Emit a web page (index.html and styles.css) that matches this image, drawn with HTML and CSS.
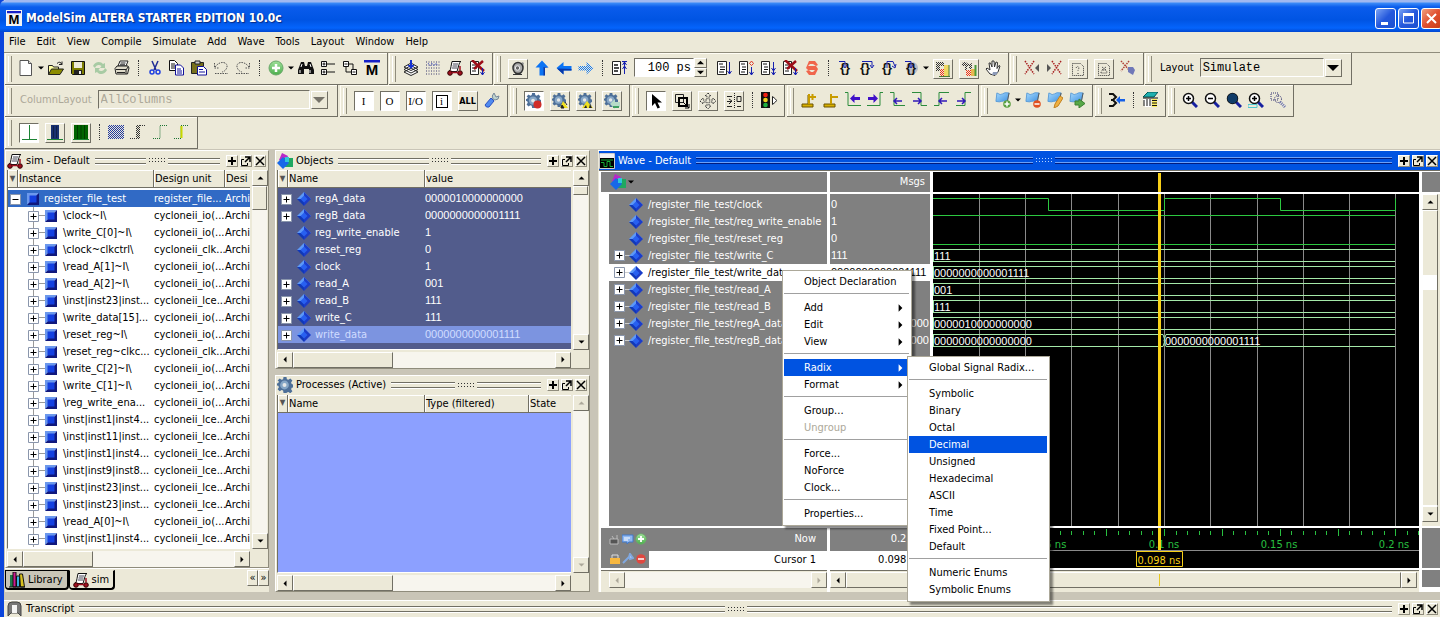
FILE: index.html
```html
<!DOCTYPE html>
<html lang="en">
<head>
<meta charset="utf-8">
<title>ModelSim ALTERA STARTER EDITION 10.0c</title>
<link rel="stylesheet" href="styles.css">
</head>
<body>
<svg class="sprite" aria-hidden="true">
<defs>
<pattern id="dk" width="2" height="2" patternUnits="userSpaceOnUse"><path d="M0 0h1v1H0zM1 1h1v1H1z" fill="#333"/></pattern>
<pattern id="db" width="2" height="2" patternUnits="userSpaceOnUse"><path d="M0 0h1v1H0zM1 1h1v1H1z" fill="#2038a0"/></pattern>
<pattern id="dl" width="2" height="2" patternUnits="userSpaceOnUse"><path d="M0 0h1v1H0zM1 1h1v1H1z" fill="#1478f0"/></pattern>
<pattern id="dr" width="2" height="2" patternUnits="userSpaceOnUse"><path d="M0 0h1v1H0zM1 1h1v1H1z" fill="#f03018"/></pattern>
<linearGradient id="gg" x2="0" y2="1"><stop stop-color="#9fe09a"/><stop offset="1" stop-color="#4cae4c"/></linearGradient>
<linearGradient id="gb" x2="1" y2="1"><stop stop-color="#a8dcff"/><stop offset="1" stop-color="#3d8fe0"/></linearGradient>
<symbol id="i-new" viewBox="0 0 16 16"><path d="M2 .5h8.500l3 3v12H2z" fill="#fff" stroke="#555"/><path d="M10.500.5v3h3" fill="#ddd" stroke="#555"/></symbol>
<symbol id="i-open" viewBox="0 0 16 16"><path d="M.5 14.500v-9h4l1 1.500h5v2" fill="#ffffa0" stroke="#222"/><path d="M.5 14.500l3-5.500h12l-3.500 5.500z" fill="#8c8c00" stroke="#222"/><path d="M9 3.500q3-3 5 1m0-3v3h-3" fill="none" stroke="#222"/></symbol>
<symbol id="i-save" viewBox="0 0 16 16"><path d="M1.500 1.500h13v13h-12l-1-1z" fill="#7c7c00" stroke="#111"/><path d="M4 2h8v6H4z" fill="#ece9d8"/><path d="M4 10h8v4H4z" fill="#222"/><path d="M9 11h2v3H9z" fill="#eee"/></symbol>
<symbol id="i-refresh" viewBox="0 0 16 16"><path d="M1 6c2-5 8-5 10-2l2-1v5H8l1.500-2C7 4 4 5 3 8zM15 10c-2 5-8 5-10 2l-2 1V8h5L6.500 10C9 12 12 11 13 8z" fill="#a8cba4"/></symbol>
<symbol id="i-print" viewBox="0 0 16 16"><path d="M4 6l2-5h8l-2 5z" fill="#fff" stroke="#222"/><path d="M1 8.500l2-2.500h11l1 2-1.500 6H2z" fill="#e0dccb" stroke="#222"/><path d="M2 9.500h10M3 12.500h8M14 7l-2 3v4M6.500 3h5M6 4.800h5" stroke="#222" fill="none"/></symbol>
<symbol id="i-cut" viewBox="0 0 16 16"><path d="M5 1l4 9M11 1l-4 9" stroke="#1d2b96" stroke-width="1.500"/><circle cx="5" cy="12" r="2" fill="none" stroke="#2040e0" stroke-width="1.500"/><circle cx="11" cy="12" r="2" fill="none" stroke="#2040e0" stroke-width="1.500"/></symbol>
<symbol id="i-copy" viewBox="0 0 16 16"><path d="M.5.5h5l3 3v7h-8z" fill="#fff" stroke="#111"/><path d="M2 4h4M2 6h4M2 8h4" stroke="#111"/><path d="M6.500 5h5l3 3v7h-8z" fill="#fff" stroke="#10109a"/><path d="M8 9h4M8 11h5M8 13h5" stroke="#10109a"/></symbol>
<symbol id="i-paste" viewBox="0 0 16 16"><path d="M.5 2.500h12v11H.5z" fill="#77701c" stroke="#222"/><path d="M4 1h5v3H4z" fill="#ccc" stroke="#222"/><path d="M6.500 6.500h6l3 3v5.500h-9z" fill="#fff" stroke="#10109a"/><path d="M8 9.500h4M8 12h6" stroke="#10109a"/></symbol>
<symbol id="i-undo" viewBox="0 0 16 16"><path d="M1.500 3v5h5M2 7C7 0 15 2 14 7q-1 4-5 5M2 13.500h13" fill="none" stroke="#555" stroke-dasharray="1.500 1"/></symbol>
<symbol id="i-redo" viewBox="0 0 16 16"><path d="M14.500 3v5h-5M14 7C9 0 1 2 2 7q1 4 5 5M1 13.500h13" fill="none" stroke="#555" stroke-dasharray="1.500 1"/></symbol>
<symbol id="i-add" viewBox="0 0 16 16"><circle cx="8" cy="8" r="7" fill="url(#gg)" stroke="#6aa86a"/><path d="M8 4v8M4 8h8" stroke="#fff" stroke-width="2.500"/></symbol>
<symbol id="i-bino" viewBox="0 0 16 16"><path d="M3 2h3l1 4h2l1-4h3l3 8v4h-5V9H6v5H0v-4z" fill="#111"/><path d="M2 10v3M12 10v3M4 4l-1 3M12 4l1 3" stroke="#fff"/></symbol>
<symbol id="i-tree" viewBox="0 0 16 16"><path d="M1.500 1.500h5v5h-5zM1.500 9.500h5v5h-5z" fill="#fff" stroke="#111"/><path d="M2.500 4h3M4 2.500v3M2.500 12h3M4 10.500v3M7 4h8M7 12h8" stroke="#111"/></symbol>
<symbol id="i-tree2" viewBox="0 0 16 16"><path d="M1.500 1.500h5v5h-5zM9.500 9.500h5v5h-5z" fill="#fff" stroke="#111"/><path d="M2.500 4h3M10.500 12h3M7 4h4v5M4 7v5h5" stroke="#111" fill="none"/></symbol>
<symbol id="i-m" viewBox="0 0 16 16"><path d="M0 0h16v2.500H0z" fill="#1620c8"/><text x="8" y="15" text-anchor="middle" class="glyph-m">M</text></symbol>
<symbol id="i-layers" viewBox="0 0 16 16"><path d="M1 12l7-4 7 4-7 3.500zM1 9.500l7-4 7 4-7 3.500zM1 7l7-4 7 4-7 3.500z" fill="#fff" stroke="#222"/><path d="M8 0v6" stroke="#1430d0" stroke-width="2"/><path d="M4.500 5h7L8 9z" fill="#1430d0"/></symbol>
<symbol id="i-dither" viewBox="0 0 16 16"><path d="M1 2h14M1 5h14M1 8h14M1 11h14M1 14h14" stroke="#38386c" stroke-dasharray="1 1.500" fill="none"/><path d="M3 3l2 3 2-3 2 3 2-3 2 3" fill="none" stroke="#4050c0" stroke-dasharray="1 1"/></symbol>
<symbol id="i-cart" viewBox="0 0 16 16"><path d="M5 1.500h9q-2 1-2 3l-2 7H2q2-2 2-5z" fill="#fff" stroke="#111"/><path d="M6 4h5M5.500 6h5M5 8h5" stroke="#445"/><circle cx="3" cy="13" r="2.300" fill="#a01020" stroke="#300"/><circle cx="13" cy="13" r="2.300" fill="#a01020" stroke="#300"/><path d="M5 12.500h6M13 10V6" stroke="#a01020" stroke-width="1.500"/></symbol>
<symbol id="i-runx" viewBox="0 0 16 16"><path d="M1.500 1.500h8v13h-8z" fill="#fff" stroke="#222"/><path d="M3 5h4M3 8h5M3 11h4" stroke="#111"/><path d="M3 0l12 11M14 1L5 9" stroke="#9c0c18" stroke-width="2.500"/><path d="M13.500 8v7M11.500 12l2 3 2-3" stroke="#1620b0" fill="none"/></symbol>
<symbol id="i-ring" viewBox="0 0 16 16"><path d="M12 1l2 1-3 11H5z" fill="#999"/><ellipse cx="8" cy="7" rx="5" ry="5.500" fill="#aaa" stroke="#333" stroke-width="1.500"/><circle cx="7.500" cy="7" r="2.200" fill="#666" stroke="#eee"/><path d="M3 13.500h9" stroke="#333"/></symbol>
<symbol id="i-up" viewBox="0 0 16 16"><path d="M8 .5l6.500 7h-4v8h-5v-8h-4z" fill="#0c74f4"/><path d="M9.500 7v8.500h1.500V8h3.500" fill="#0838a8"/></symbol>
<symbol id="i-left" viewBox="0 0 16 16"><path d="M.5 8l7-6v4h8v4.500h-8v4z" fill="#0c74f4"/><path d="M1 8.500l6.500 6v-4h8V9z" fill="#0838a8"/></symbol>
<symbol id="i-right" viewBox="0 0 16 16"><path d="M15.500 8l-7-6v4h-8v4.500h8v4z" fill="url(#dl)"/></symbol>
<symbol id="i-restart" viewBox="0 0 16 16"><path d="M1.500 1.500h8v13h-8z" fill="#fff" stroke="#222"/><path d="M3 5h4M3 8h5M3 11h4" stroke="#111" stroke-width="1.500"/><path d="M13.500 2v12M11.500 5l2-3 2 3M11.500 9l2-3 2 3M11 1.500h5" stroke="#1620b0" fill="none"/></symbol>
<symbol id="i-run" viewBox="0 0 16 16"><path d="M1.500 1.500h9v13h-9z" fill="#fff" stroke="#222"/><path d="M3 4h4M4 7h5M4 9.500h5M3 12h5" stroke="#111"/><path d="M13.500 2v12M11.500 11l2 3 2-3" stroke="#1620b0" fill="none"/></symbol>
<symbol id="i-cont" viewBox="0 0 16 16"><path d="M1.500 1.500h8v13h-8z" fill="#fff" stroke="#222"/><path d="M3 4h4M4 7h4M4 9.500h4M3 12h4" stroke="#111"/><path d="M13.500 7v8M11.500 12l2 3 2-3" stroke="#1620b0" fill="none"/><path d="M13.500 1l2 2.500-2 2-2-2z" fill="none" stroke="#e03828"/></symbol>
<symbol id="i-runall" viewBox="0 0 16 16"><path d="M1.500 1.500h8v13h-8z" fill="#fff" stroke="#222"/><path d="M3 4h4M4 7h4M4 9.500h4M3 12h4" stroke="#111"/><path d="M13.500 2v13M11.500 8l2 3 2-3M11.500 12l2 3 2-3" stroke="#1620b0" fill="none"/></symbol>
<symbol id="i-stop" viewBox="0 0 16 16"><path d="M5 1h6l3 4-2 1-3-2H6L4 6h8l2 3-3 6H5l-3-4 3-1 2 2h2l2-2H4L2 8z" fill="#f0664c"/></symbol>
<symbol id="i-step1" viewBox="0 0 16 16"><text x="8" y="12" text-anchor="middle" class="glyph-b">{}</text><path d="M2 1.500h6v5M6 5l2 3 2-3" fill="none" stroke="#1620b0"/></symbol>
<symbol id="i-step2" viewBox="0 0 16 16"><text x="6" y="12" text-anchor="middle" class="glyph-b">{}</text><path d="M3 1.500h10v5M11 5l2 3 2-3" fill="none" stroke="#1620b0"/></symbol>
<symbol id="i-step3" viewBox="0 0 16 16"><text x="6" y="12" text-anchor="middle" class="glyph-b">{}</text><path d="M6 8V1.500h6l2 5M11 6l3 2 1-4" fill="none" stroke="#1620b0"/></symbol>
<symbol id="i-step4" viewBox="0 0 16 16"><circle cx="9" cy="8" r="6" fill="#b8bcc8"/><text x="8" y="12" text-anchor="middle" class="glyph-b">{}</text><path d="M2 1.500h6v5M6 5l2 3 2-3" fill="none" stroke="#1620b0"/></symbol>
<symbol id="i-prof1" viewBox="0 0 16 16"><path d="M1 1h8v4H5v5H1z" fill="url(#dk)"/><path d="M9 4h5v11H9z" fill="#efd860"/><path d="M5 8h4v7H5z" fill="url(#dr)"/><path d="M14 4v11M4 15.500h11" stroke="#4a7a3a"/></symbol>
<symbol id="i-prof2" viewBox="0 0 16 16"><path d="M1 2q3-2 5 0t5 0v6h-3V5H6v4H4V5H1z" fill="url(#dk)"/><path d="M10 8h4v7h-4z" fill="#e7b850"/><path d="M5 9h5v6H5z" fill="url(#dr)"/><path d="M14.500 4v11" stroke="#4a9a3a" stroke-width="2"/></symbol>
<symbol id="i-hand" viewBox="0 0 16 16"><path d="M5 14L1 9l1-1 3 2-1-7h1.500L7 7V1h2l.5 6L11 2l1.500.5-.5 6 2-3 1 .5-2 6-3 3.500z" fill="#fff" stroke="#333"/><path d="M8 12h5l-2 3H7z" fill="#8c9ab8"/></symbol>
<symbol id="i-xl" viewBox="0 0 16 16"><path d="M1 1l9 13M10 1L1 14" stroke="#a82020" stroke-width="1.500" stroke-dasharray="1.500 1"/><path d="M15 4v8l-4-4z" fill="#555"/></symbol>
<symbol id="i-xr" viewBox="0 0 16 16"><path d="M6 1l9 13M15 1L6 14" stroke="#a82020" stroke-width="1.500" stroke-dasharray="1.500 1"/><path d="M1 4v8l4-4z" fill="#555"/></symbol>
<symbol id="i-q" viewBox="0 0 16 16"><path d="M2.500 2.500h8l3 3v9h-11z" fill="none" stroke="#333" stroke-dasharray="1 1"/><path d="M6 7q2-3 3 0-1 2-1 3M8 12v1" fill="none" stroke="#333" stroke-dasharray="1 1"/></symbol>
<symbol id="i-q2" viewBox="0 0 16 16"><path d="M2.500 2.500h8l3 3v9h-11z" fill="none" stroke="#333" stroke-dasharray="1 1"/><path d="M5 12q0-3 3-3t3 3zM6 6l4 3M10 6L6 9" fill="none" stroke="#333" stroke-dasharray="1 1"/></symbol>
<symbol id="i-xb" viewBox="0 0 16 16"><path d="M1 1l9 10M9 1L1 11" stroke="#b04038" stroke-width="1.500" stroke-dasharray="1.500 1"/><path d="M8 7h5l2 3-2 5-5-3z" fill="#7078b8"/></symbol>
<symbol id="i-gear" viewBox="0 0 16 16"><path d="M6.500 0h3l.4 2.200 1.500.6 1.900-1.300 2.100 2.100-1.300 1.900.6 1.500 1.300.4v3l-1.300.4-.6 1.500 1.300 1.900-2.100 2.100-1.900-1.300-1.500.6L9.500 16h-3l-.4-2.400-1.500-.6-1.900 1.300-2.100-2.100 1.300-1.900-.6-1.500L0 8.500v-2l1.300-.5.6-1.500L.6 3.600l2.100-2.100 1.900 1.300 1.500-.6z" fill="#4d6f98"/><circle cx="7.500" cy="8" r="4.400" fill="#86a6c6"/><circle cx="7.500" cy="8" r="2" fill="#e6e8e8"/></symbol>
<symbol id="i-g1" viewBox="0 0 16 16"><use href="#i-gear" width="15" height="15"/><circle cx="11.500" cy="11.500" r="4" fill="#d02c28"/></symbol>
<symbol id="i-g2" viewBox="0 0 16 16"><use href="#i-gear" width="14" height="14"/><path d="M8 15l3-7 5 7z" fill="#f0e020"/><path d="M10 12l2 3h-3zM13 9l2 3" stroke="#222" fill="#222"/></symbol>
<symbol id="i-g3" viewBox="0 0 16 16"><use href="#i-gear" width="14" height="14"/><path d="M4 15l5-7 6 7z" fill="#f0e020"/><path d="M6 15l2-3 1 3zM12 11l2 4h-3z" fill="#222"/></symbol>
<symbol id="i-g4" viewBox="0 0 16 16"><use href="#i-gear" width="14" height="14"/><path d="M6 11l5-5v3h5v5h-5v2z" fill="#b8dcc8"/><path d="M9 14h6" stroke="#40a060" stroke-width="2"/></symbol>
<symbol id="i-wrench" viewBox="0 0 16 16"><path d="M10 1q-3 3-1 6l2 1q4 0 4-4l-3 1-1-2z" fill="#c0d4d0" stroke="#789"/><path d="M7 6l3 3-5 6q-3 1-4-2z" fill="#4f8af0" stroke="#2a50c0"/></symbol>
<symbol id="i-select" viewBox="0 0 16 16"><path d="M4 1v12l3-3 2.500 5.500 2.500-1-2.500-5H14z" fill="#000"/></symbol>
<symbol id="i-zoomsel" viewBox="0 0 16 16"><path d="M1.500 1.500h8v8h-8z" fill="none" stroke="#222"/><path d="M5 5h8v8H5z" fill="none" stroke="#000" stroke-width="2"/><path d="M9 9l6 6M15 11v4h-4" stroke="#000" fill="none"/></symbol>
<symbol id="i-pan" viewBox="0 0 16 16"><path d="M8 0l3 3H9v4h4V5l3 3-3 3V9H9v4h2l-3 3-3-3h2V9H3v2L0 8l3-3v2h4V3H5z" fill="none" stroke="#333" stroke-dasharray="1.500 1"/></symbol>
<symbol id="i-edit" viewBox="0 0 16 16"><path d="M8.500 0v16" stroke="#222" stroke-dasharray="1 1"/><path d="M1 3.500h5M1 13.500h5M3 6l3 2-3 3M11 3.500h4v5h-4zM11 13.500h4M1 8.500h4" fill="none" stroke="#222"/></symbol>
<symbol id="i-light" viewBox="0 0 16 16"><path d="M0 0h9v16H0z" fill="#111"/><circle cx="4.500" cy="3" r="2.300" fill="#f02010"/><circle cx="4.500" cy="8" r="2.300" fill="#f0d020"/><circle cx="4.500" cy="13" r="2.300" fill="#20b040"/><path d="M11.500 4.500q4 3 4 4t-4 4z" fill="#fff" stroke="#222"/></symbol>
<symbol id="i-cur1" viewBox="0 0 16 16"><path d="M3 12h9v3H1v-3zM7 3v9" fill="#d8b000" stroke="#6a5200"/><path d="M8 2v10M8 5h7M11.500 2v6" stroke="#c89c00" stroke-width="2"/></symbol>
<symbol id="i-cur2" viewBox="0 0 16 16"><path d="M3 12h9v3H1v-3z" fill="#d8b000" stroke="#6a5200"/><path d="M8 2v10M8 5h7" stroke="#c89c00" stroke-width="2"/></symbol>
<symbol id="i-e1" viewBox="0 0 16 16"><path d="M0 .5h3v13h13" fill="none" stroke="#2c8c3c"/><path d="M5 6.500L9.500 2v3H15v3H9.500v3z" fill="#4010c8"/></symbol>
<symbol id="i-e2" viewBox="0 0 16 16"><path d="M16 .5h-3v13H0" fill="none" stroke="#2c8c3c"/><path d="M11 6.500L6.500 2v3H1v3h5.500v3z" fill="#4010c8"/></symbol>
<symbol id="i-e3" viewBox="0 0 16 16"><path d="M1 .5h4v13h11" fill="none" stroke="#2c8c3c"/><path d="M5 9h8M8 6l-3 3 3 3" fill="none" stroke="#3018b8" stroke-width="1.500"/></symbol>
<symbol id="i-e4" viewBox="0 0 16 16"><path d="M1 .5h9v13h6" fill="none" stroke="#2c8c3c"/><path d="M2 9h8M7 6l3 3-3 3" fill="none" stroke="#3018b8" stroke-width="1.500"/></symbol>
<symbol id="i-e5" viewBox="0 0 16 16"><path d="M1 13.500h5v-13h10" fill="none" stroke="#2c8c3c"/><path d="M6 9h8M9 6L6 9l3 3" fill="none" stroke="#3018b8" stroke-width="1.500"/></symbol>
<symbol id="i-e6" viewBox="0 0 16 16"><path d="M1 13.500h9v-13h6" fill="none" stroke="#2c8c3c"/><path d="M2 9h8M7 6l3 3-3 3" fill="none" stroke="#3018b8" stroke-width="1.500"/></symbol>
<symbol id="i-flag" viewBox="0 0 16 16"><path d="M2 1q4 3 6 1t7-1l-2 9q-4-1-6 0t-6 0z" fill="url(#gb)" stroke="#5a9cd8"/><path d="M15 1l-2 10" stroke="#555"/></symbol>
<symbol id="i-f1" viewBox="0 0 16 16"><use href="#i-flag" width="15" height="15"/><circle cx="12" cy="12" r="3.800" fill="#5aa040"/><path d="M12 9.500v5M9.500 12h5" stroke="#fff" stroke-width="1.500"/></symbol>
<symbol id="i-f2" viewBox="0 0 16 16"><use href="#i-flag" width="15" height="15"/><circle cx="12" cy="12" r="3.800" fill="#e05020"/><path d="M9.500 12h5" stroke="#fff" stroke-width="1.500"/></symbol>
<symbol id="i-f3" viewBox="0 0 16 16"><use href="#i-flag" width="15" height="15"/><path d="M13 4l3 2-5 8-4 2 1-4z" fill="#f0b040" stroke="#c08020"/></symbol>
<symbol id="i-f4" viewBox="0 0 16 16"><use href="#i-flag" width="15" height="15"/><path d="M6 9h4V7l6 4.500L10 16v-3H6z" fill="#58a848" stroke="#3a8030"/></symbol>
<symbol id="i-merge" viewBox="0 0 16 16"><path d="M0 2h4l3 3-3 3H2h2l3 3-3 3H0" fill="none" stroke="#111" stroke-width="2"/><path d="M7 8l4-4v3h5v2.500h-5V12z" fill="#1460e8"/></symbol>
<symbol id="i-calc" viewBox="0 0 16 16"><path d="M1 5l5-5h10l-4 5z" fill="#20b0b0" stroke="#055"/><path d="M1 7h8v8H3z" fill="#fff"/><path d="M2 8v6M5 7v7M8 7v7" stroke="#111"/><path d="M10 7h5v8h-5z" fill="#fff060"/><path d="M10 8.500h5M10 11h5M10 13.500h5M1 6h15" stroke="#111"/></symbol>
<symbol id="i-lens" viewBox="0 0 16 16"><path d="M10 10l5 5" stroke="#1620a0" stroke-width="3"/><circle cx="6.500" cy="6.500" r="5" fill="#fff" stroke="#111" stroke-width="1.500"/></symbol>
<symbol id="i-zin" viewBox="0 0 16 16"><use href="#i-lens"/><path d="M4 6.500h5M6.500 4v5" stroke="#000" stroke-width="1.500"/></symbol>
<symbol id="i-zout" viewBox="0 0 16 16"><use href="#i-lens"/><path d="M4 6.500h5" stroke="#000" stroke-width="1.500"/></symbol>
<symbol id="i-zfull" viewBox="0 0 16 16"><use href="#i-lens"/><circle cx="6.500" cy="6.500" r="5" fill="#103c68"/></symbol>
<symbol id="i-zcur" viewBox="0 0 16 16"><use href="#i-lens"/><path d="M4 6.500h5M6.500 4v5" stroke="#000" stroke-width="1.500"/><path d="M0 12.500h9v3H0z" fill="#ece9d8" stroke="#50c8d0"/></symbol>
<symbol id="i-zother" viewBox="0 0 16 16"><path d="M1 1h7v7H1z" fill="none" stroke="#303070" stroke-dasharray="1 1"/><circle cx="8" cy="7" r="3.500" fill="none" stroke="#303070" stroke-dasharray="1 1"/><path d="M10 10l5 5" stroke="#6870b0" stroke-width="3" stroke-dasharray="1 1"/></symbol>
<symbol id="i-w1" viewBox="0 0 16 16"><path d="M8.500 0v14M1 14.500h15" stroke="#1c8434" fill="none"/></symbol>
<symbol id="i-w2" viewBox="0 0 16 16"><path d="M4 0h8v14H4z" fill="#183070"/><path d="M6.500 1v12M9.500 1v12" stroke="#102048"/><path d="M0 14.500h16" stroke="#1c8434"/></symbol>
<symbol id="i-w3" viewBox="0 0 16 16"><path d="M1 0h14v14H1z" fill="#006400"/><path d="M4.500 0v14M8 0v14M11.500 0v14" stroke="#003c00"/><path d="M0 14.500h16" stroke="#1c8434"/></symbol>
<symbol id="i-w4" viewBox="0 0 16 16"><path d="M0 1h16v14H0z" fill="url(#db)"/></symbol>
<symbol id="i-w5" viewBox="0 0 16 16"><path d="M6 1h4v14H6z" fill="url(#dk)"/><path d="M0 14.500h6M10 1.500h5" stroke="#333" stroke-dasharray="1 1"/></symbol>
<symbol id="i-w6" viewBox="0 0 16 16"><path d="M1 14.500h7v-13h7" fill="none" stroke="#1c7434" stroke-dasharray="1 1"/></symbol>
<symbol id="i-w7" viewBox="0 0 16 16"><path d="M0 14.500h7v-13h8" fill="none" stroke="#1c7434" stroke-dasharray="1 1"/><path d="M7.500 2v12" stroke="#c8d800" stroke-width="2"/></symbol>
<symbol id="i-plusbox" viewBox="0 0 11 11"><path d="M.5.5h10v10H.5z" fill="#fff" stroke="#8a96ac"/><path d="M2.500 5.500h6M5.500 2.500v6" stroke="#000"/></symbol>
<symbol id="i-minusbox" viewBox="0 0 11 11"><path d="M.5.5h10v10H.5z" fill="#fff" stroke="#8a96ac"/><path d="M2.500 5.500h6" stroke="#000"/></symbol>
<symbol id="i-cube" viewBox="0 0 12 12"><path d="M0 0h12L0 12z" fill="#6c98ec"/><path d="M12 0v12H0z" fill="#10187c"/><path d="M2.500 2.500h7v7h-7z" fill="#1440e0"/></symbol>
<symbol id="i-dia" viewBox="0 0 14 14"><path d="M7 0l7 7H0z" fill="#5c98f8"/><path d="M7 0l7 7-7 7z" fill="#1c3cc8"/><path d="M0 7h7v7z" fill="#1038b8"/><path d="M7 3.500l3.500 3.500L7 10.500 3.500 7z" fill="#2860f0"/></symbol>
<symbol id="i-obj" viewBox="0 0 16 16"><path d="M5 0l6 3-2 6-7-2z" fill="#b828c8"/><path d="M7 5h9v9H7z" fill="#20a860"/><path d="M6 4l6 6-6 6-6-6z" fill="#1868e8"/><path d="M8 4h4v5H8z" fill="#30c8d8"/></symbol>
<symbol id="i-wave" viewBox="0 0 16 16"><path d="M.5.500h15v15H.5z" fill="#000" stroke="#ccc"/><path d="M1 1h14v4H1z" fill="#f4f4f4"/><path d="M2 9.500h3v4h3v-5h3v5h3M2 7h12" fill="none" stroke="#18b038"/></symbol>
<symbol id="i-script" viewBox="0 0 16 16"><path d="M1 15V5q0-4 4-4h5q4 0 4 4v10l-3-3H4z" fill="#777" stroke="#444"/><path d="M5 4h5v8H5z" fill="#f4f4f4"/></symbol>
<symbol id="i-lib" viewBox="0 0 16 16"><path d="M1 3h3v12H1z" fill="#207848"/><path d="M4 0h3v15H4z" fill="#d01890" stroke="#111"/><path d="M7.500 4h3v11h-3z" fill="#38b0e0" stroke="#111"/><path d="M10.500 2h3l2 13h-4z" fill="#d8c020" stroke="#111"/><path d="M0 15h16" stroke="#111"/></symbol>
<symbol id="i-dock" viewBox="0 0 10 10"><path d="M3 3.500H.5v6h6V7" fill="none" stroke="#000"/><path d="M4 1h5v5M9 1L4 6" fill="none" stroke="#000" stroke-width="1.500"/></symbol>
<symbol id="i-close" viewBox="0 0 10 10"><path d="M1 1l8 8M9 1L1 9" stroke="#000" stroke-width="1.500"/></symbol>
<symbol id="i-plus" viewBox="0 0 10 10"><path d="M5 1v8M1 5h8" stroke="#000" stroke-width="2"/></symbol>
<symbol id="i-down" viewBox="0 0 6 4"><path d="M0 .5h6L3 3.500z" fill="currentColor"/></symbol>
<symbol id="i-tup" viewBox="0 0 6 4"><path d="M0 3.500h6L3 .5z" fill="currentColor"/></symbol>
<symbol id="i-tl" viewBox="0 0 4 6"><path d="M3.500 0v6L.5 3z" fill="currentColor"/></symbol>
<symbol id="i-tr" viewBox="0 0 4 6"><path d="M.5 0v6l3-3z" fill="currentColor"/></symbol>
<symbol id="i-cam" viewBox="0 0 12 12"><path d="M1 6h8v5H1zM3 3l2 3M8 2v4" fill="#555" stroke="#bbb"/></symbol>
<symbol id="i-note" viewBox="0 0 12 12"><path d="M0 2h11v7H7l-2 2V9H0z" fill="#90b8f0" stroke="#4078c8"/><path d="M2 5h6M2 7h4" stroke="#fff"/></symbol>
<symbol id="i-lock" viewBox="0 0 12 12"><path d="M3 6V2h6v4" fill="none" stroke="#ddd"/><path d="M1 5h10v6H1z" fill="#f8b840"/></symbol>
<symbol id="i-tool" viewBox="0 0 12 12"><path d="M1 10l6-6M7 4l1-3 3 4-3 1z" stroke="#80a8e0" stroke-width="2" fill="#c8d8f0"/></symbol>
<symbol id="i-rem" viewBox="0 0 12 12"><circle cx="6" cy="6" r="4.800" fill="#e04840"/><path d="M3 6h6" stroke="#fff" stroke-width="1.500"/></symbol>
</defs>
</svg>

<div class="app">
<header class="titlebar">
  <span class="logo"><svg width="14" height="14"><use href="#i-m"/></svg></span>
  <h1>ModelSim ALTERA STARTER EDITION 10.0c</h1>
  <button class="win" aria-label="Minimize"><svg width="20" height="20"><path d="M5 14.500h7" stroke="#fff" stroke-width="3"/></svg></button>
  <button class="win" aria-label="Maximize"><svg width="20" height="20"><path d="M4.500 5h10v9h-10z" fill="none" stroke="#fff"/><path d="M4 5.500h11" stroke="#fff" stroke-width="3"/></svg></button>
  <button class="win win-close" aria-label="Close"><svg width="20" height="20"><path d="M5 5l9 9M14 5l-9 9" stroke="#fff" stroke-width="2"/></svg></button>
</header>
<nav class="menubar">
  <button>File</button><button>Edit</button><button>View</button><button>Compile</button><button>Simulate</button><button>Add</button><button>Wave</button><button>Tools</button><button>Layout</button><button>Window</button><button>Help</button>
</nav>

<div class="toolrow tight">
  <div class="group">
    <button class="tb" aria-label="New"><svg><use href="#i-new"/></svg></button><button class="drop" aria-label="New options"><svg><use href="#i-down"/></svg></button>
    <button class="tb" aria-label="Open"><svg><use href="#i-open"/></svg></button>
    <button class="tb" aria-label="Save"><svg><use href="#i-save"/></svg></button>
    <button class="tb" aria-label="Reload"><svg><use href="#i-refresh"/></svg></button>
    <button class="tb" aria-label="Print"><svg><use href="#i-print"/></svg></button><i class="sep"></i>
    <button class="tb" aria-label="Cut"><svg><use href="#i-cut"/></svg></button>
    <button class="tb" aria-label="Copy"><svg><use href="#i-copy"/></svg></button>
    <button class="tb" aria-label="Paste"><svg><use href="#i-paste"/></svg></button>
    <button class="tb" aria-label="Undo"><svg><use href="#i-undo"/></svg></button>
    <button class="tb" aria-label="Redo"><svg><use href="#i-redo"/></svg></button><i class="sep"></i>
    <button class="tb" aria-label="Add selected"><svg><use href="#i-add"/></svg></button><button class="drop" aria-label="Add options"><svg><use href="#i-down"/></svg></button>
    <button class="tb" aria-label="Find"><svg><use href="#i-bino"/></svg></button>
    <button class="tb" aria-label="Collapse all"><svg><use href="#i-tree"/></svg></button>
    <button class="tb" aria-label="Expand all"><svg><use href="#i-tree2"/></svg></button>
    <button class="tb" aria-label="ModelSim"><svg><use href="#i-m"/></svg></button>
  </div>
  <div class="group">
    <button class="tb" aria-label="Compile"><svg><use href="#i-layers"/></svg></button>
    <button class="tb" aria-label="Compile all"><svg><use href="#i-dither"/></svg></button>
    <button class="tb" aria-label="Simulate"><svg><use href="#i-cart"/></svg></button>
    <button class="tb" aria-label="Break"><svg><use href="#i-runx"/></svg></button>
  </div>
  <div class="group">
    <button class="tb raised" aria-label="Capture"><svg><use href="#i-ring"/></svg></button>
    <button class="tb" aria-label="Up"><svg><use href="#i-up"/></svg></button>
    <button class="tb" aria-label="Back"><svg><use href="#i-left"/></svg></button>
    <button class="tb" aria-label="Forward"><svg><use href="#i-right"/></svg></button><i class="sep"></i>
    <button class="tb" aria-label="Restart"><svg><use href="#i-restart"/></svg></button>
    <span class="spin"><input aria-label="Run length" value="100 ps"><span><button aria-label="Increase"><svg><use href="#i-tup"/></svg></button><button aria-label="Decrease"><svg><use href="#i-down"/></svg></button></span></span>
    <button class="tb" aria-label="Run"><svg><use href="#i-run"/></svg></button>
    <button class="tb" aria-label="Continue"><svg><use href="#i-cont"/></svg></button>
    <button class="tb" aria-label="Run all"><svg><use href="#i-runall"/></svg></button>
    <button class="tb" aria-label="Break run"><svg><use href="#i-runx"/></svg></button>
    <button class="tb" aria-label="Stop"><svg><use href="#i-stop"/></svg></button><i class="sep"></i>
    <button class="tb" aria-label="Step into"><svg><use href="#i-step1"/></svg></button>
    <button class="tb" aria-label="Step over"><svg><use href="#i-step2"/></svg></button>
    <button class="tb" aria-label="Step out"><svg><use href="#i-step3"/></svg></button>
    <button class="tb" aria-label="Step instance"><svg><use href="#i-step4"/></svg></button><button class="drop" aria-label="Step options"><svg><use href="#i-down"/></svg></button>
    <button class="tb raised" aria-label="Performance profile"><svg><use href="#i-prof1"/></svg></button>
    <button class="tb raised" aria-label="Memory profile"><svg><use href="#i-prof2"/></svg></button>
    <button class="tb" aria-label="Pan"><svg><use href="#i-hand"/></svg></button>
  </div>
  <div class="group">
    <button class="tb" aria-label="Previous X"><svg><use href="#i-xl"/></svg></button>
    <button class="tb" aria-label="Next X"><svg><use href="#i-xr"/></svg></button>
    <button class="tb raised" aria-label="Show language"><svg><use href="#i-q"/></svg></button>
    <button class="tb raised" aria-label="Show coverage"><svg><use href="#i-q2"/></svg></button>
    <button class="tb" aria-label="Clear"><svg><use href="#i-xb"/></svg></button>
  </div>
  <div class="group">
    <label class="combo combo-layout"><span class="combo-label">Layout</span><select><option>Simulate</option></select><span class="combo-btn"><svg width="12" height="8"><use href="#i-down"/></svg></span></label>
  </div>
</div>

<div class="toolrow">
  <div class="group">
    <label class="combo combo-cols"><span class="combo-label">ColumnLayout</span><select disabled><option>AllColumns</option></select><span class="combo-btn"><svg width="12" height="8"><path d="M0 1h12L6 7z" fill="#77746a"/></svg></span></label>
  </div>
  <div class="group">
    <button class="tb raised down" aria-label="Inputs"><b>I</b></button>
    <button class="tb raised down" aria-label="Outputs"><b>O</b></button>
    <button class="tb raised down" aria-label="Inouts"><b>I/O</b></button>
    <button class="tb raised down" aria-label="Internals"><b class="boxed">i</b></button>
    <button class="tb raised" aria-label="All"><b class="all">ALL</b></button>
    <button class="tb" aria-label="Settings"><svg><use href="#i-wrench"/></svg></button>
  </div>
  <div class="group">
    <button class="tb raised down" aria-label="Active processes"><svg><use href="#i-g1"/></svg></button>
    <button class="tb raised" aria-label="Processes in region"><svg><use href="#i-g2"/></svg></button>
    <button class="tb raised" aria-label="Process hierarchy"><svg><use href="#i-g3"/></svg></button>
    <button class="tb raised" aria-label="Design processes"><svg><use href="#i-g4"/></svg></button>
  </div>
  <div class="group">
    <button class="tb raised down" aria-label="Select mode"><svg><use href="#i-select"/></svg></button>
    <button class="tb raised" aria-label="Zoom mode"><svg><use href="#i-zoomsel"/></svg></button>
    <button class="tb raised" aria-label="Pan mode"><svg><use href="#i-pan"/></svg></button>
    <button class="tb raised" aria-label="Edit mode"><svg><use href="#i-edit"/></svg></button><i class="sep"></i>
    <button class="tb" aria-label="Stop drawing"><svg><use href="#i-light"/></svg></button>
  </div>
  <div class="group">
    <button class="tb" aria-label="Insert cursor"><svg><use href="#i-cur1"/></svg></button>
    <button class="tb" aria-label="Delete cursor"><svg><use href="#i-cur2"/></svg></button>
    <button class="tb" aria-label="Previous transition"><svg><use href="#i-e1"/></svg></button>
    <button class="tb" aria-label="Next transition"><svg><use href="#i-e2"/></svg></button>
    <button class="tb" aria-label="Previous falling edge"><svg><use href="#i-e3"/></svg></button>
    <button class="tb" aria-label="Next falling edge"><svg><use href="#i-e4"/></svg></button>
    <button class="tb" aria-label="Previous rising edge"><svg><use href="#i-e5"/></svg></button>
    <button class="tb" aria-label="Next rising edge"><svg><use href="#i-e6"/></svg></button>
  </div>
  <div class="group">
    <button class="tb" aria-label="Add bookmark"><svg><use href="#i-f1"/></svg></button><button class="drop" aria-label="Bookmark options"><svg><use href="#i-down"/></svg></button>
    <button class="tb" aria-label="Remove bookmark"><svg><use href="#i-f2"/></svg></button>
    <button class="tb" aria-label="Edit bookmark"><svg><use href="#i-f3"/></svg></button>
    <button class="tb" aria-label="Go to bookmark"><svg><use href="#i-f4"/></svg></button>
  </div>
  <div class="group">
    <button class="tb" aria-label="Combine"><svg><use href="#i-merge"/></svg></button><i class="sep"></i>
    <button class="tb" aria-label="Export"><svg><use href="#i-calc"/></svg></button>
  </div>
  <div class="group">
    <button class="tb" aria-label="Zoom in"><svg><use href="#i-zin"/></svg></button>
    <button class="tb" aria-label="Zoom out"><svg><use href="#i-zout"/></svg></button>
    <button class="tb" aria-label="Zoom full"><svg><use href="#i-zfull"/></svg></button>
    <button class="tb" aria-label="Zoom on cursor"><svg><use href="#i-zcur"/></svg></button>
    <button class="tb" aria-label="Zoom other"><svg><use href="#i-zother"/></svg></button>
  </div>
</div>

<div class="toolrow">
  <div class="group">
    <button class="tb raised down" aria-label="Expanded time off"><svg><use href="#i-w1"/></svg></button>
    <button class="tb raised" aria-label="Expanded deltas"><svg><use href="#i-w2"/></svg></button>
    <button class="tb raised" aria-label="Expanded events"><svg><use href="#i-w3"/></svg></button><i class="sep"></i>
    <button class="tb" aria-label="Expand all time"><svg><use href="#i-w4"/></svg></button>
    <button class="tb" aria-label="Expand at cursor"><svg><use href="#i-w5"/></svg></button>
    <button class="tb" aria-label="Collapse all time"><svg><use href="#i-w6"/></svg></button>
    <button class="tb" aria-label="Collapse at cursor"><svg><use href="#i-w7"/></svg></button>
  </div>
</div>

<main class="work">
  <section class="col col-sim">
    <div class="panel">
      <div class="ptitle"><svg class="pic"><use href="#i-cart"/></svg><h2>sim - Default</h2><i class="bar"></i><i class="dots"></i><i class="bar"></i><button aria-label="Zoom pane"><svg><use href="#i-plus"/></svg></button><button aria-label="Undock"><svg><use href="#i-dock"/></svg></button><button aria-label="Close pane"><svg><use href="#i-close"/></svg></button></div>
      <div class="pbody">
        <div class="grid-wrap">
          <table class="list sim">
            <thead><tr><th class="c-arrow">▼</th><th class="c-name">Instance</th><th class="c-unit">Design unit</th><th>Desi</th></tr></thead>
            <tbody>
<tr class="sel root"><td colspan="2"><svg class="box"><use href="#i-minusbox"/></svg><svg class="cube"><use href="#i-cube"/></svg>register_file_test</td><td>register_file...</td><td>Archi</td></tr>
<tr><td colspan="2"><svg class="box"><use href="#i-plusbox"/></svg><svg class="cube"><use href="#i-cube"/></svg>\clock~I\</td><td>cycloneii_io(...</td><td>Archi</td></tr>
<tr><td colspan="2"><svg class="box"><use href="#i-plusbox"/></svg><svg class="cube"><use href="#i-cube"/></svg>\write_C[0]~I\</td><td>cycloneii_io(...</td><td>Archi</td></tr>
<tr><td colspan="2"><svg class="box"><use href="#i-plusbox"/></svg><svg class="cube"><use href="#i-cube"/></svg>\clock~clkctrl\</td><td>cycloneii_clk...</td><td>Archi</td></tr>
<tr><td colspan="2"><svg class="box"><use href="#i-plusbox"/></svg><svg class="cube"><use href="#i-cube"/></svg>\read_A[1]~I\</td><td>cycloneii_io(...</td><td>Archi</td></tr>
<tr><td colspan="2"><svg class="box"><use href="#i-plusbox"/></svg><svg class="cube"><use href="#i-cube"/></svg>\read_A[2]~I\</td><td>cycloneii_io(...</td><td>Archi</td></tr>
<tr><td colspan="2"><svg class="box"><use href="#i-plusbox"/></svg><svg class="cube"><use href="#i-cube"/></svg>\inst|inst23|inst...</td><td>cycloneii_lce...</td><td>Archi</td></tr>
<tr><td colspan="2"><svg class="box"><use href="#i-plusbox"/></svg><svg class="cube"><use href="#i-cube"/></svg>\write_data[15]...</td><td>cycloneii_io(...</td><td>Archi</td></tr>
<tr><td colspan="2"><svg class="box"><use href="#i-plusbox"/></svg><svg class="cube"><use href="#i-cube"/></svg>\reset_reg~I\</td><td>cycloneii_io(...</td><td>Archi</td></tr>
<tr><td colspan="2"><svg class="box"><use href="#i-plusbox"/></svg><svg class="cube"><use href="#i-cube"/></svg>\reset_reg~clkc...</td><td>cycloneii_clk...</td><td>Archi</td></tr>
<tr><td colspan="2"><svg class="box"><use href="#i-plusbox"/></svg><svg class="cube"><use href="#i-cube"/></svg>\write_C[2]~I\</td><td>cycloneii_io(...</td><td>Archi</td></tr>
<tr><td colspan="2"><svg class="box"><use href="#i-plusbox"/></svg><svg class="cube"><use href="#i-cube"/></svg>\write_C[1]~I\</td><td>cycloneii_io(...</td><td>Archi</td></tr>
<tr><td colspan="2"><svg class="box"><use href="#i-plusbox"/></svg><svg class="cube"><use href="#i-cube"/></svg>\reg_write_ena...</td><td>cycloneii_io(...</td><td>Archi</td></tr>
<tr><td colspan="2"><svg class="box"><use href="#i-plusbox"/></svg><svg class="cube"><use href="#i-cube"/></svg>\inst|inst1|inst4...</td><td>cycloneii_lce...</td><td>Archi</td></tr>
<tr><td colspan="2"><svg class="box"><use href="#i-plusbox"/></svg><svg class="cube"><use href="#i-cube"/></svg>\inst|inst11|inst...</td><td>cycloneii_lce...</td><td>Archi</td></tr>
<tr><td colspan="2"><svg class="box"><use href="#i-plusbox"/></svg><svg class="cube"><use href="#i-cube"/></svg>\inst|inst1|inst4...</td><td>cycloneii_lce...</td><td>Archi</td></tr>
<tr><td colspan="2"><svg class="box"><use href="#i-plusbox"/></svg><svg class="cube"><use href="#i-cube"/></svg>\inst|inst9|inst8...</td><td>cycloneii_lce...</td><td>Archi</td></tr>
<tr><td colspan="2"><svg class="box"><use href="#i-plusbox"/></svg><svg class="cube"><use href="#i-cube"/></svg>\inst|inst23|inst...</td><td>cycloneii_lce...</td><td>Archi</td></tr>
<tr><td colspan="2"><svg class="box"><use href="#i-plusbox"/></svg><svg class="cube"><use href="#i-cube"/></svg>\inst|inst23|inst...</td><td>cycloneii_lce...</td><td>Archi</td></tr>
<tr><td colspan="2"><svg class="box"><use href="#i-plusbox"/></svg><svg class="cube"><use href="#i-cube"/></svg>\read_A[0]~I\</td><td>cycloneii_io(...</td><td>Archi</td></tr>
<tr><td colspan="2"><svg class="box"><use href="#i-plusbox"/></svg><svg class="cube"><use href="#i-cube"/></svg>\inst|inst1|inst4...</td><td>cycloneii_lce...</td><td>Archi</td></tr>
            </tbody>
          </table>
        </div>
        <div class="vs"><button aria-label="Scroll up"><svg class="ar"><use href="#i-tup"/></svg></button><i class="thumb t-sim"></i><i class="fill"></i><button aria-label="Scroll down"><svg class="ar"><use href="#i-down"/></svg></button></div>
      </div>
      <div class="hs"><button aria-label="Scroll left"><svg class="arh"><use href="#i-tl"/></svg></button><i class="thumb h-sim"></i><i class="fill"></i><button aria-label="Scroll right"><svg class="arh"><use href="#i-tr"/></svg></button></div>
    </div>
    <div class="tabs"><button class="tab off"><svg><use href="#i-lib"/></svg>Library</button><button class="tab on"><svg><use href="#i-cart"/></svg>sim</button><span class="fill"></span><button class="nav" aria-label="Previous tab">«</button><button class="nav" aria-label="Next tab">»</button></div>
  </section>

  <section class="col col-obj">
    <div class="panel p-objects">
      <div class="ptitle"><svg class="pic"><use href="#i-obj"/></svg><h2>Objects</h2><i class="bar"></i><i class="dots"></i><i class="bar"></i><button aria-label="Zoom pane"><svg><use href="#i-plus"/></svg></button><button aria-label="Undock"><svg><use href="#i-dock"/></svg></button><button aria-label="Close pane"><svg><use href="#i-close"/></svg></button></div>
      <div class="pbody">
        <div class="grid-wrap navy">
          <table class="list objs">
            <thead><tr><th class="c-arrow">▼</th><th class="c-oname">Name</th><th>value</th></tr></thead>
            <tbody>
<tr><td colspan="2"><svg class="box"><use href="#i-plusbox"/></svg><svg class="dia"><use href="#i-dia"/></svg>regA_data</td><td class="num">0000010000000000</td></tr>
<tr><td colspan="2"><svg class="box"><use href="#i-plusbox"/></svg><svg class="dia"><use href="#i-dia"/></svg>regB_data</td><td class="num">0000000000001111</td></tr>
<tr><td colspan="2"><svg class="box"></svg><svg class="dia"><use href="#i-dia"/></svg>reg_write_enable</td><td class="num">1</td></tr>
<tr><td colspan="2"><svg class="box"></svg><svg class="dia"><use href="#i-dia"/></svg>reset_reg</td><td class="num">0</td></tr>
<tr><td colspan="2"><svg class="box"></svg><svg class="dia"><use href="#i-dia"/></svg>clock</td><td class="num">1</td></tr>
<tr><td colspan="2"><svg class="box"><use href="#i-plusbox"/></svg><svg class="dia"><use href="#i-dia"/></svg>read_A</td><td class="num">001</td></tr>
<tr><td colspan="2"><svg class="box"><use href="#i-plusbox"/></svg><svg class="dia"><use href="#i-dia"/></svg>read_B</td><td class="num">111</td></tr>
<tr><td colspan="2"><svg class="box"><use href="#i-plusbox"/></svg><svg class="dia"><use href="#i-dia"/></svg>write_C</td><td class="num">111</td></tr>
<tr class="hl"><td colspan="2"><svg class="box"><use href="#i-plusbox"/></svg><svg class="dia"><use href="#i-dia"/></svg>write_data</td><td class="num">0000000000001111</td></tr>
            </tbody>
          </table>
        </div>
        <div class="vs"><button aria-label="Scroll up"><svg class="ar"><use href="#i-tup"/></svg></button><i class="thumb t-obj"></i><i class="fill"></i><button aria-label="Scroll down"><svg class="ar"><use href="#i-down"/></svg></button></div>
      </div>
      <div class="hs"><button aria-label="Scroll left"><svg class="arh"><use href="#i-tl"/></svg></button><i class="thumb h-obj"></i><i class="fill"></i><button aria-label="Scroll right"><svg class="arh"><use href="#i-tr"/></svg></button></div>
    </div>
    <div class="panel p-proc">
      <div class="ptitle"><svg class="pic"><use href="#i-gear"/></svg><h2>Processes (Active)</h2><i class="bar"></i><i class="dots"></i><i class="bar"></i><button aria-label="Zoom pane"><svg><use href="#i-plus"/></svg></button><button aria-label="Undock"><svg><use href="#i-dock"/></svg></button><button aria-label="Close pane"><svg><use href="#i-close"/></svg></button></div>
      <div class="pbody">
        <div class="grid-wrap sky">
          <table class="list"><thead><tr><th class="c-arrow">▼</th><th class="c-oname">Name</th><th class="c-type">Type (filtered)</th><th>State</th></tr></thead></table>
        </div>
        <div class="vs off"><button disabled aria-label="Scroll up"><svg class="ar"><use href="#i-tup"/></svg></button><i class="fill"></i><button disabled aria-label="Scroll down"><svg class="ar"><use href="#i-down"/></svg></button></div>
      </div>
      <div class="hs"><button aria-label="Scroll left"><svg class="arh"><use href="#i-tl"/></svg></button><i class="thumb h-obj"></i><i class="fill"></i><button aria-label="Scroll right"><svg class="arh"><use href="#i-tr"/></svg></button></div>
    </div>
  </section>

  <section class="col col-wave">
    <div class="ptitle active"><svg class="pic"><use href="#i-wave"/></svg><h2>Wave - Default</h2><i class="bar"></i><i class="dots"></i><i class="bar"></i><button aria-label="Zoom pane"><svg><use href="#i-plus"/></svg></button><button aria-label="Undock"><svg><use href="#i-dock"/></svg></button><button aria-label="Close pane"><svg><use href="#i-close"/></svg></button></div>
    <div class="wave">
      <div class="w-head"><svg width="18" height="16"><use href="#i-obj"/></svg><svg width="6" height="4"><use href="#i-down"/></svg></div>
      <div class="w-head w-msgs">Msgs</div>
      <div class="w-black"><svg class="canvas"><path d="M226.500 1v19" stroke="#f8d018" stroke-width="3"/></svg></div>
      <div class="w-gray"></div>

      <ul class="names">
        <li><svg class="box"></svg><svg class="dia"><use href="#i-dia"/></svg>/register_file_test/clock</li>
        <li><svg class="box"></svg><svg class="dia"><use href="#i-dia"/></svg>/register_file_test/reg_write_enable</li>
        <li><svg class="box"></svg><svg class="dia"><use href="#i-dia"/></svg>/register_file_test/reset_reg</li>
        <li class="br"><svg class="box"><use href="#i-plusbox"/></svg><svg class="dia"><use href="#i-dia"/></svg>/register_file_test/write_C</li>
        <li class="br cur"><svg class="box"><use href="#i-plusbox"/></svg><svg class="dia"><use href="#i-dia"/></svg>/register_file_test/write_data</li>
        <li class="br"><svg class="box"><use href="#i-plusbox"/></svg><svg class="dia"><use href="#i-dia"/></svg>/register_file_test/read_A</li>
        <li class="br"><svg class="box"><use href="#i-plusbox"/></svg><svg class="dia"><use href="#i-dia"/></svg>/register_file_test/read_B</li>
        <li class="br"><svg class="box"><use href="#i-plusbox"/></svg><svg class="dia"><use href="#i-dia"/></svg>/register_file_test/regA_data</li>
        <li class="br"><svg class="box"><use href="#i-plusbox"/></svg><svg class="dia"><use href="#i-dia"/></svg>/register_file_test/regB_data</li>
      </ul>
      <ul class="vals num"><li>0</li><li>1</li><li>0</li><li>111</li><li class="cur">0000000000001111</li><li>001</li><li>111</li><li>0000010000000000</li><li>0000000000000000</li></ul>
      <div class="w-black">
        <svg class="canvas">
          <path d="M46.500 0v340M92.500 0v340M138.500 0v340M185.500 0v340M231.500 0v340M277.500 0v340M324.500 0v340M370.500 0v340M416.500 0v340M462.500 0v340" stroke="#8a8a8a"/>
          <path d="M0 4.500h115.500v12h116v-12h116v12h115v-12M0 21.500h462M0 50.500h462" fill="none" stroke="#2cc840"/>
          <path d="M0 55.500h462M0 67.500h462M0 72.500h462M0 84.500h462M0 89.500h462M0 101.500h462M0 106.500h462M0 118.500h462M0 123.500h462M0 135.500h462M0 140.500h230l2 6-2 6H0M462 140.500H233l-2 6 2 6h229M.5 55v12M.5 72v12M.5 89v12M.5 106v12M.5 123v12M.5 140v12" fill="none" stroke="#a4e8a8"/>
          <path d="M226.500 0v340" stroke="#f8d018" stroke-width="3"/>
          <g class="num" fill="#fff"><text x="1" y="66">111</text><text x="1" y="83">0000000000001111</text><text x="1" y="100">001</text><text x="1" y="117">111</text><text x="1" y="134">0000010000000000</text><text x="1" y="151">0000000000000000</text><text x="232" y="151">0000000000001111</text></g>
        </svg>
      </div>
      <div class="vs w-vs"><button aria-label="Scroll up"><svg class="ar"><use href="#i-tup"/></svg></button><i class="fill w-thumb"></i><button aria-label="Scroll down"><svg class="ar"><use href="#i-down"/></svg></button></div>

      <div class="foot">
        <div class="f-now"><span><svg><use href="#i-cam"/></svg><svg><use href="#i-note"/></svg><svg><use href="#i-add"/></svg></span><b>Now</b></div>
        <div class="f-cur"><span><svg><use href="#i-lock"/></svg><svg><use href="#i-tool"/></svg><svg><use href="#i-rem"/></svg></span><b>Cursor 1</b></div>
      </div>
      <div class="foot right"><div class="f-now"><b>0.2 ns</b></div><div class="f-cur"><b>0.098 ns</b></div></div>
      <div class="w-black">
        <svg class="canvas">
          <path d="M12 3v4M23.500 3v4M35 3v4M46.500 3v4M69.500 3v4M81 3v4M92.500 3v4M104 3v4M127.500 3v4M138.500 3v4M150.500 3v4M161.500 3v4M185.500 3v4M196.500 3v4M208.500 3v4M219.500 3v4M243.500 3v4M254.500 3v4M266.500 3v4M277.500 3v4M300.500 3v4M312.500 3v4M324.500 3v4M335.500 3v4M358.500 3v4M370.500 3v4M382.500 3v4M393.500 3v4M416.500 3v4M428.500 3v4M439.500 3v4M451.500 3v4M474.500 3v4M485.500 3v4M58.500 1v7M115.500 1v7M173.500 1v7M231.500 1v7M289.500 1v7M347.500 1v7M405.500 1v7M462.500 1v7" stroke="#28c040"/>
          <path d="M0 22.500h487" stroke="#8a8a8a"/>
          <g fill="#28c040" text-anchor="middle"><text x="115" y="20">0.05 ns</text><text x="231" y="20">0.1 ns</text><text x="346" y="20">0.15 ns</text><text x="461" y="20">0.2 ns</text></g>
          <path d="M226.500 0v22" stroke="#f8d018" stroke-width="3"/>
          <path d="M203.500 23.500h46v15h-46z" fill="none" stroke="#f8d018"/>
          <text x="226" y="36" text-anchor="middle" fill="#f8d018">0.098 ns</text>
        </svg>
      </div>
      <div class="w-gray"></div>

      <div class="hs w-hs1 off"><button disabled aria-label="Scroll left"><svg class="arh"><use href="#i-tl"/></svg></button><i class="fill"></i><button disabled aria-label="Scroll right"><svg class="arh"><use href="#i-tr"/></svg></button></div>
      <div class="hs w-hs2"><button aria-label="Scroll left"><svg class="arh"><use href="#i-tl"/></svg></button><i class="thumb h-wave"><i class="tick"></i></i><button aria-label="Scroll right"><svg class="arh"><use href="#i-tr"/></svg></button></div>
      <div class="w-gray w-corner"></div>
    </div>
  </section>
</main>

<footer class="ptitle transcript"><svg class="pic"><use href="#i-script"/></svg><h2>Transcript</h2><i class="bar"></i><i class="dots"></i><i class="bar"></i><button aria-label="Zoom pane"><svg><use href="#i-plus"/></svg></button><button aria-label="Undock"><svg><use href="#i-dock"/></svg></button><button aria-label="Close pane"><svg><use href="#i-close"/></svg></button></footer>

<div class="menu menu-main">
  <button>Object Declaration</button><hr>
  <button>Add<svg class="sub"><use href="#i-tr"/></svg></button><button>Edit<svg class="sub"><use href="#i-tr"/></svg></button><button>View<svg class="sub"><use href="#i-tr"/></svg></button><hr>
  <button class="pick">Radix<svg class="sub"><use href="#i-tr"/></svg></button><button>Format<svg class="sub"><use href="#i-tr"/></svg></button><hr>
  <button>Group...</button><button disabled>Ungroup</button><hr>
  <button>Force...</button><button>NoForce</button><button>Clock...</button><hr>
  <button>Properties...</button>
</div>
<div class="menu menu-radix">
  <button>Global Signal Radix...</button><hr>
  <button>Symbolic</button><button>Binary</button><button>Octal</button><button class="pick">Decimal</button><button>Unsigned</button><button>Hexadecimal</button><button>ASCII</button><button>Time</button><button>Fixed Point...</button><button>Default</button><hr>
  <button>Numeric Enums</button><button>Symbolic Enums</button>
</div>
</div>
</body>
</html>
```
FILE: styles.css
```css
* { box-sizing: border-box; }
html, body { height: 100%; margin: 0; }
body {
  background: #ece9d8;
  color: #000;
  font: 11px/16px "DejaVu Sans Condensed", "Noto Sans", sans-serif;
  overflow: hidden;
}
button, select, input { font: inherit; color: inherit; margin: 0; padding: 0; border: 0; background: none; border-radius: 0; }
h1, h2, ul { margin: 0; padding: 0; font-size: inherit; font-weight: normal; list-style: none; }
svg { display: block; flex: none; }
i, b { font-style: normal; font-weight: normal; }
.sprite { position: absolute; width: 0; height: 0; }
.num { font-family: "Liberation Sans", sans-serif; font-size: 11px; }
.glyph-m { font: bold 15px "Liberation Sans", sans-serif; fill: currentColor; }
.glyph-b { font: bold 13px "Liberation Sans", sans-serif; fill: #111; }
.fill { flex: 1; }

.app { position: relative; display: flex; flex-direction: column; height: 100%; border-left: 4px solid #0b45dc; }

.titlebar {
  display: flex; align-items: center; height: 32px; margin-left: -4px; padding: 4px 0 0 6px; flex: none; overflow: hidden;
  background: linear-gradient(#a0b8f0 0, #a0b8f0 2px, #3c8cf8 3px, #0a5cec 7px, #0054e3 20px, #0464fc 28px, #0046d0 32px);
  border-radius: 6px 0 0 0;
}
.titlebar h1 { flex: 1; margin-left: 4px; color: #fff; font: bold 12px/18px "DejaVu Sans Condensed", sans-serif; text-shadow: 1px 1px 1px #0a2a80; }
.logo { display: block; padding: 1px; background: #f4f4f4; }
.win { width: 21px; height: 21px; margin-left: 2px; border: 1px solid #fff; border-radius: 3px; background: linear-gradient(135deg, #7ca4f4, #2458dc 50%, #1c50d0); flex: none; }
.win-close { margin-right: -2px; background: linear-gradient(135deg, #f0a080, #e05030 50%, #c83c18); }

.menubar { display: flex; gap: 11px; height: 21px; padding: 1px 6px 0 5px; border-bottom: 1px solid #8f8c7c; flex: none; }
.menubar button { height: 17px; }

.toolrow { display: flex; gap: 2px; height: 32px; padding-left: 1px; flex: none; }
.tight { gap: 1px; }
.group { display: flex; align-items: center; padding: 0 4px 2px 11px; border: 1px solid #716f64; border-width: 0 1px 1px 0; box-shadow: inset 1px 1px #fffdf4; position: relative; flex: none; }
.tight .group:first-child { padding-left: 10px; }
.group::before { content: ""; position: absolute; left: 3px; top: 3px; bottom: 2px; width: 2px; border-left: 1px solid #fff; border-right: 1px solid #8f8c7c; }
.tb { display: flex; align-items: center; justify-content: center; width: 22px; height: 22px; }
.tb svg { width: 16px; height: 16px; }
.raised { width: 20px; height: 20px; margin: 3px 3px 0; border: 1px solid; border-color: #fff #716f64 #716f64 #fff; }
.down { background: #fff; border-color: #716f64 #fff #fff #716f64; }
.raised b { font: 11px/16px "Liberation Serif", serif; }
.raised b.boxed { border: 1px solid #000; width: 12px; line-height: 11px; }
.raised b.all { font: bold 9px/16px "DejaVu Sans Condensed", sans-serif; }
.drop { display: flex; align-items: center; justify-content: center; width: 8px; height: 22px; }
.drop svg { width: 6px; height: 4px; }
.sep { width: 11px; height: 16px; }
.sep::before { content: ""; display: block; margin-left: 5px; height: 16px; border-left: 1px dotted #333; }
.spin { display: flex; width: 73px; height: 19px; margin: 0 6px 0 4px; }
.spin input { flex: 1; width: 0; padding-right: 2px; text-align: right; background: #fff; border: 1px solid; border-color: #716f64 #fff #fff #716f64; font: 12px/16px "Liberation Mono", monospace; }
.spin > span { display: flex; flex-direction: column; width: 13px; }
.spin button { display: flex; align-items: center; justify-content: center; flex: 1; border: 1px solid; border-color: #fff #716f64 #716f64 #fff; }
.spin svg { width: 7px; height: 5px; }
.combo { display: flex; align-items: center; height: 22px; padding: 0 5px 0 4px; }
.combo-label { margin-right: 6px; }
.combo select { appearance: none; width: 124px; height: 19px; padding-left: 2px; border: 1px solid; border-color: #716f64 #fff #fff #716f64; font: 12px/16px "Liberation Mono", monospace; opacity: 1; }
.combo-btn { display: flex; align-items: center; justify-content: center; width: 17px; height: 18px; margin-left: 1px; border: 1px solid; border-color: #fff #716f64 #716f64 #fff; }
.combo-cols select { width: 212px; }
.combo-cols, .combo-cols select { color: #aca899; }

.work { display: flex; gap: 6px; flex: 1; min-height: 0; padding: 1px 0 8px 1px; background: #c9c5b7; }
.col { display: flex; flex-direction: column; min-height: 0; background: #ece9d8; }
.col-sim { width: 264px; flex: none; }
.col-obj { width: 315px; flex: none; background: none; gap: 6px; }
.col-wave { flex: 1; min-width: 0; margin-left: 2px; padding-left: 1px; border-top: 1px solid #fff; }
.panel { display: flex; flex-direction: column; flex: 1; min-height: 0; padding-left: 1px; background: #ece9d8; border: 1px solid; border-color: #fff #8f8c7c #8f8c7c #fff; }
.p-objects { flex: 1 1 219px; }
.p-proc { flex: 1 1 218px; }

.ptitle { display: flex; align-items: center; height: 19px; padding-right: 2px; flex: none; }
.ptitle .pic { width: 16px; height: 16px; }
.ptitle h2 { margin: 0 5px 0 3px; white-space: nowrap; }
.ptitle button { display: flex; align-items: center; justify-content: center; width: 12px; height: 12px; margin-left: 2px; border: 1px solid; border-color: #fff #8f8c7c #8f8c7c #fff; background: #ece9d8; }
.ptitle button svg { width: 10px; height: 10px; }
.bar { flex: 1; height: 6px; border: 1px solid #716f64; border-width: 1px 0; box-shadow: 0 1px #fff, inset 0 1px #fff; }
.ptitle .bar + button { margin-left: 6px; }
.dots { width: 18px; height: 7px; margin: 0 2px; background: radial-gradient(circle, #333 0 1px, transparent 1px) 0 0 / 3px 3px; }
.active { background: #0053e1; color: #fff; }
.active .bar { border-color: #001c80; box-shadow: 0 -1px #6ca0f8, inset 0 -1px #6ca0f8; }
.active .dots { background-image: radial-gradient(circle, #b8d4ff 0 1px, transparent 1px); }
.transcript { height: 17px; padding-left: 3px; border-top: 1px solid #fff; }

.pbody { display: flex; flex: 1; min-height: 0; }
.grid-wrap { flex: 1; min-width: 0; overflow: hidden; background: #fff; border-left: 1px solid #716f64; border-bottom: 1px solid #fff; }
.list { table-layout: fixed; width: 100%; border-collapse: separate; border-spacing: 0; }
.list th { height: 18px; padding: 1px 0 0 1px; line-height: 16px; text-align: left; font-weight: normal; background: #ece9d8; border-right: 1px solid #716f64; border-bottom: 1px solid #716f64; box-shadow: inset 1px 1px #fff; overflow: hidden; white-space: nowrap; }
.list th:last-child { border-right: 0; }
.list .c-arrow { width: 10px; padding: 0; font-size: 8px; text-align: center; color: #555; }
.c-name { width: 136px; }
.c-unit { width: 71px; }
.c-oname { width: 137px; }
.c-type { width: 104px; }
.list tbody::before { content: ""; display: block; height: 2px; }
.list td { height: 17px; padding: 0; line-height: 17px; white-space: nowrap; overflow: hidden; }
.list td svg { display: inline-block; vertical-align: middle; }
.box { width: 11px; height: 11px; }
.cube { width: 12px; height: 12px; margin: 0 6px; }
.dia { width: 14px; height: 14px; }
.sim td:first-child { padding-left: 20px; background: linear-gradient(#999, #999) 25px 0 / 1px 100% no-repeat, linear-gradient(#999, #999) 28px 8px / 10px 1px no-repeat; }
.sim .root td:first-child { padding-left: 2px; background: none; }
.sim .root .cube { margin: 0 5px 0 6px; }
.sel { background: #316ac5; color: #fff; }
.navy { background: #525c8c; color: #fff; }
.navy th, .sky th { color: #000; }
.sky { background: #8ca0ff; }
.objs td:first-child { padding-left: 3px; }
.objs .dia { margin: 0 4px 0 5px; }
.hl { background: #7c94e0; color: #d0dcff; }

.vs { display: flex; flex-direction: column; width: 18px; padding: 0 1px 0 2px; flex: none; background: #ece9d8; }
.vs button, .hs button { display: flex; align-items: center; justify-content: center; width: 16px; height: 16px; flex: none; background: #ece9d8; border: 1px solid; border-color: #fff #716f64 #716f64 #fff; }
.ar { width: 7px; height: 4px; }
.arh { width: 4px; height: 7px; }
.vs .fill, .hs .fill { background: #f7f5ee; }
.thumb { flex: none; background: #ece9d8; border: 1px solid; border-color: #fff #716f64 #716f64 #fff; }
.t-sim { height: 24px; }
.t-obj { height: 9px; }
.hs { display: flex; height: 18px; padding: 2px 0 0; margin-right: 18px; flex: none; }
.h-sim { width: 70px; }
.h-obj { width: 100px; }
.off button { color: #aca899; }

.tabs { display: flex; height: 24px; flex: none; padding-top: 1px; border-top: 1px solid #fff; }
.tab { display: flex; align-items: center; gap: 3px; height: 20px; padding: 0 4px 0 3px; border: 1px solid #000; border-width: 1px 2px 2px 1px; border-radius: 0 0 4px 4px; }
.tab svg { width: 16px; height: 16px; }
.tabs .off { background: #c9c5b7; }
.tabs .on { border-top-color: #ece9d8; }
.nav { width: 11px; height: 16px; line-height: 12px; border: 1px solid; border-color: #fff #716f64 #716f64 #fff; }

.wave {
  display: grid; flex: 1; min-height: 0; background: #fff; gap: 2px 3px; padding: 1px 0 0 2px;
  grid-template-columns: 226px 100px minmax(0, 1fr) 18px;
  grid-template-rows: 20px minmax(0, 1fr) 40px 22px;
  border-top: 1px solid #716f64;
}
.w-head { display: flex; align-items: center; gap: 1px; padding-left: 8px; background: #808080; }
.w-msgs { justify-content: flex-end; padding-right: 5px; color: #fff; }
.w-gray { background: #808080; }
.w-corner { margin-bottom: 5px; }
.w-black { background: #000; min-height: 0; }
.canvas { width: 100%; height: 100%; }
.names { margin-left: 8px; padding-top: 2px; background: #808080; color: #fff; overflow: hidden; }
.names li { display: flex; align-items: center; height: 17px; padding-left: 5px; white-space: nowrap; }
.names .dia { margin: 0 5px 0 4px; }
.names .br { background: linear-gradient(#ccc, #ccc) 15px 8px / 8px 1px no-repeat; }
.vals { padding: 2px 0 0 1px; background: #808080; color: #fff; overflow: hidden; }
.vals li { height: 17px; line-height: 17px; padding-left: 1px; margin-left: -1px; }
.names .cur, .vals .cur { background-color: #fff; color: #000; }
.w-vs { padding: 0 2px 4px 0; }
.w-thumb { border: 1px solid #fff; border-right-color: #716f64; }
.w-vs .w-thumb { background: linear-gradient(#fff, #fff) 0 64px / 100% 15px no-repeat #ece9d8; }
.foot { display: flex; flex-direction: column; background: #808080; }
.f-now, .f-cur { display: flex; align-items: center; flex: 1; }
.foot span { display: flex; width: 48px; padding-left: 8px; gap: 1px; }
.foot span svg { width: 12px; height: 12px; }
.foot b { flex: 1; text-align: right; padding-right: 11px; }
.f-now { color: #fff; }
.f-cur { flex: 0 0 18px; }
.f-cur b { background: #fff; line-height: 17px; }
.foot.right b { padding-right: 9px; }
.w-hs1, .w-hs2 { height: 22px; margin: 0; padding: 1px 0 4px; background: #ece9d8; border-top: 1px solid #716f64; }
.w-hs1 { padding-left: 8px; }
.w-hs2 { grid-column: 2 / 4; padding-right: 2px; }
.h-wave { flex: 1; padding: 1px 0 0 312px; }
.tick { display: block; width: 1px; height: 12px; background: #e8c820; }

.menu { position: absolute; display: flex; flex-direction: column; padding: 2px 2px 3px 1px; background: #fff; border: 1px solid #aca899; box-shadow: 3px 3px 2px rgba(0, 0, 0, .45); }
.menu button { display: flex; align-items: center; height: 17px; padding: 0 6px 0 20px; white-space: nowrap; }
.menu button:disabled { color: #aca899; }
.menu hr { width: 100%; height: 9px; margin: 0; border: 0; background: linear-gradient(#a0a0a0, #a0a0a0) 0 3px / 100% 1px no-repeat; }
.menu .pick { background: #0053e1; color: #fff; }
.sub { width: 5px; height: 8px; margin-left: auto; }
.menu-main { left: 778px; top: 270px; width: 130px; }
.menu-radix { left: 903px; top: 356px; width: 143px; }
```
